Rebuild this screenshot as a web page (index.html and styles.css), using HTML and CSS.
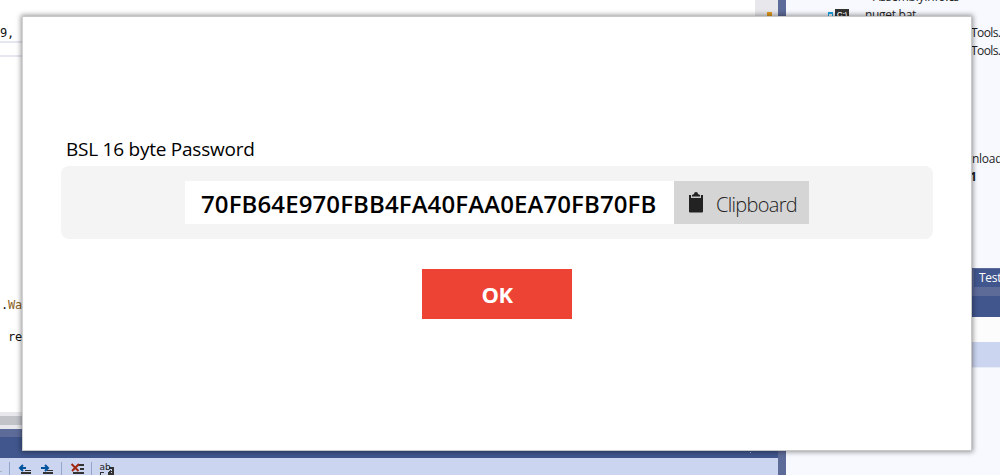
FILE: index.html
```
<!DOCTYPE html>
<html lang="en">
<head>
<meta charset="utf-8">
<title>BSL Password</title>
<link rel="stylesheet" href="styles.css">
</head>
<body>
<div class="ide">
  <div class="left">
    <div class="editor">
      <div class="code">
        <div class="line line-first">9,</div>
        <div class="current-line"></div>
        <div class="line line-wait">.<span class="method">Wa</span></div>
        <div class="line line-return">re</div>
      </div>
      <div class="scrollbar"><span class="mark"></span></div>
    </div>
    <div class="hscroll"></div>
    <div class="gap"></div>
    <div class="titlebar"><span class="tick"></span></div>
    <div class="toolbar">
      <svg width="130" height="17" viewBox="0 0 130 17" shape-rendering="crispEdges">
        <path d="M0 13.500h2" stroke="#aab0bd"/>
        <path d="M9.500 4v13M61.500 4v13M91.500 4v13" stroke="#94a5cb"/>
        <path d="M20 10h6M23 7l-3 3 3 3" fill="none" stroke="#00539c" stroke-width="2" shape-rendering="auto"/>
        <path d="M25 12.500h6" stroke="#333"/><path d="M21 14h10v2H21z" fill="#333"/>
        <path d="M41 10h6M45 7l3 3-3 3" fill="none" stroke="#00539c" stroke-width="2" shape-rendering="auto"/>
        <path d="M47 12.500h6" stroke="#333"/><path d="M43 14h10v2H43z" fill="#333"/>
        <path d="M78 6h6v2h-6zM80 10h4v2h-4zM73 14h11v2H73z" fill="#333"/>
        <path d="M71.500 6l7 7M79 6l-7 7" stroke="#a1260d" stroke-width="2" shape-rendering="auto"/>
        <path d="M109 10h4v6h-5M111 13l-3 3" fill="none" stroke="#333" stroke-width="2"/>
        <text x="99.500" y="12" class="abc">ab</text>
        <path d="M100.500 17v-2.500h3" fill="none" stroke="#333"/>
      </svg>
    </div>
  </div>
  <div class="splitter"></div>
  <div class="right">
    <div class="tree">
      <div class="row assembly">AssemblyInfo.cs</div>
      <div class="row nuget"><span class="lock"></span><span class="cmd">C:\</span><span>nuget.bat</span></div>
      <div class="row tools">Tools.</div>
      <div class="row tools">Tools.</div>
      <div class="row unload">unload</div>
      <div class="row one">1</div>
    </div>
    <div class="tabs"><span class="tab">Test</span></div>
    <div class="props-title"></div>
    <div class="props-name"></div>
    <div class="props-tools"></div>
  </div>
</div>
<main class="dialog">
  <div class="label"><span>BSL 16 byte Password</span></div>
  <div class="panel">
    <div class="password"><span>70FB64E970FBB4FA40FAA0EA70FB70FB</span></div>
    <button class="copy">
      <svg width="16" height="22" viewBox="0 0 16 22">
        <path d="M1 3h14v16.500q0 1-1 1H2q-1 0-1-1z" fill="#222"/>
        <path d="M3 3h10v3H3z" fill="#c9c9c9"/>
        <path d="M4 4.500V3l2-1q0-2 2-2t2 2l2 1v1.500z" fill="#222"/>
      </svg>
      <span>Clipboard</span>
    </button>
  </div>
  <button class="ok"><span>OK</span></button>
</main>
</body>
</html>
```
FILE: styles.css
```
* { box-sizing: border-box; }
body { margin: 0; width: 1000px; height: 475px; overflow: hidden; background: #fff; font-family: "Open Sans", "Noto Sans", sans-serif; }
button { border: 0; padding: 0; font-family: inherit; }
.ide { display: flex; width: 1000px; height: 475px; }
.left { width: 778px; display: flex; flex-direction: column; }
.editor { height: 412px; display: flex; }
.code { width: 755px; }
.line { height: 16px; font: 12px/16px "DejaVu Sans Mono", monospace; letter-spacing: -0.200px; color: #111; white-space: pre; }
.line-first { margin-top: 25px; }
.current-line { height: 16px; border: 2px solid #e6e6f0; border-left: 0; }
.line-wait { margin-top: 240px; padding-left: 1px; }
.method { color: #8a6020; }
.line-return { margin-top: 16px; padding-left: 8px; }
.scrollbar { width: 23px; background: #e8e8ec; padding: 12px 0 0 12px; }
.mark { display: block; width: 5px; height: 5px; background: #e09b1c; }
.hscroll { height: 17px; background: #c2c3c9; border-top: 4px solid #e8e8ec; border-bottom: 4px solid #e8e8ec; }
.gap { height: 8px; background: #5d6b99; }
.titlebar { height: 21px; background: #40568d; padding: 15px 0 0 750px; }
.tick { display: block; width: 1px; height: 1px; background: #aab6d5; }
.toolbar { height: 17px; background: #ccd5f0; }
.toolbar svg { display: block; }
.abc { font: 9px "DejaVu Sans", sans-serif; fill: #222; }
.splitter { width: 8px; background: #5d6b99; }
.right { width: 214px; background: #f7f9fe; }
.tree { height: 268px; overflow: hidden; }
.row { height: 18px; font-size: 12px; line-height: 18px; color: #1e1e1e; white-space: nowrap; }
.assembly { margin-top: -12px; padding-left: 87px; letter-spacing: -0.250px; }
.nuget { display: flex; padding-left: 42px; letter-spacing: -0.300px; }
.lock { width: 5px; height: 7px; margin: 6px 2px 0 0; border: 1px solid #1ba1e2; border-top-width: 2px; }
.cmd { width: 14px; height: 11px; margin: 3px 16px 0 0; background: #333; color: #fff; font: bold 8px/11px "Liberation Sans", sans-serif; letter-spacing: 0; text-align: center; }
.tools { padding-left: 185px; letter-spacing: -0.600px; }
.unload { margin-top: 90px; padding-left: 179px; letter-spacing: -0.300px; }
.one { padding-left: 184px; font-weight: 700; }
.tabs { height: 28px; background: #5d6b99; padding: 1px 0 0 188px; }
.tab { display: block; height: 18px; padding-left: 5px; background: #40568d; color: #fff; font-size: 12px; line-height: 18px; letter-spacing: -0.300px; }
.props-title { height: 21px; background: #40568d; }
.props-name { height: 25px; background: #fcfcfc; }
.props-tools { height: 26px; background: #ccd5f0; border-bottom: 1px solid #e8ecf5; }
.dialog { position: absolute; left: 22px; top: 16px; width: 950px; height: 435px; padding: 120px 38px 0 38px; background: #fff; border: 1px solid #c8c8c8; border-left-color: #d2d2d2; box-shadow: 0 0 5px 1px rgba(0,0,0,.42); display: flex; flex-direction: column; color: #000; }
.label { height: 29px; padding-left: 5px; font-size: 19px; line-height: 25px; white-space: nowrap; letter-spacing: -0.240px; }
.panel { height: 73px; background: #f4f4f4; border-radius: 8px; display: flex; padding: 15px 0 15px 124px; }
.password { width: 489px; background: #fff; padding-left: 16px; font-size: 24px; font-weight: 600; line-height: 46px; white-space: nowrap; letter-spacing: 0.110px; }
.copy { width: 135px; background: #d5d5d5; display: flex; padding: 11px 0 0 14px; gap: 12px; color: #222; font-size: 20px; font-weight: 300; line-height: 26px; letter-spacing: -0.700px; }
.ok { width: 150px; height: 50px; margin: 30px 0 0 361px; background: #ed4334; color: #fff; font-size: 22px; font-weight: 700; line-height: 50px; letter-spacing: -0.500px; }
```
